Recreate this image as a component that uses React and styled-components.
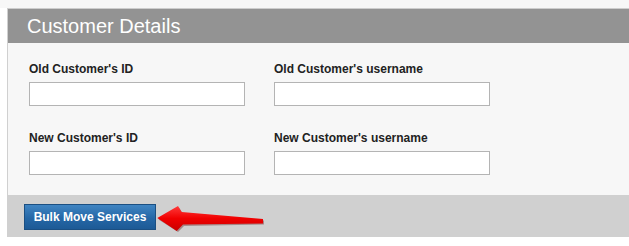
import React from 'react';
import styled, { createGlobalStyle } from 'styled-components';


const GlobalStyle = createGlobalStyle`
  body {
    margin: 0;
    background: #fff;
    font-family: "Liberation Sans", Arial, sans-serif;
  }
`;


const Page = styled.div`
  padding: 8px 0 0 7px;
  background: linear-gradient(#f7f7f7, #f7f7f7) top / 100% 8px no-repeat;
`;

const Panel = styled.section`
  background: #d0d0d0;
  border-top: 1px solid #cdcdcd;
  border-left: 1px solid #d0d0d0;
`;

const Header = styled.h2`
  margin: 0;
  height: 34px;
  padding-left: 19px;
  background: #939393;
  color: #fff;
  font-size: 20px;
  font-weight: normal;
  line-height: 34px;
`;

const Body = styled.div`
  background: #f7f7f7;
  padding: 19px 0 20px 21px;
  display: grid;
  grid-template-columns: 216px 216px;
  column-gap: 29px;
  row-gap: 25px;
`;

const Field = styled.label`
  display: flex;
  flex-direction: column;
  gap: 6px;
`;

const Label = styled.span`
  font-size: 12px;
  font-weight: bold;
  line-height: 14px;
  color: #222;
`;

const Input = styled.input`
  box-sizing: border-box;
  width: 216px;
  height: 24px;
  margin: 0;
  border: 1px solid #b4b4b4;
  background: #fff;
  outline: none;
`;

const Footer = styled.div`
  display: flex;
  align-items: center;
  height: 42px;
  box-sizing: border-box;
  padding: 9px 16px 7px;
`;

const Button = styled.button`
  box-sizing: border-box;
  height: 26px;
  width: 132px;
  padding: 0;
  border: 1px solid #1b4f82;
  background: linear-gradient(#3f84c2, #2567a6 55%, #1d5a96);
  color: #fff;
  font-family: inherit;
  font-size: 12px;
  font-weight: bold;
  cursor: pointer;
`;

const Arrow = () => (
  <svg width="112" height="30" viewBox="0 0 112 30">
    <defs>
      <linearGradient id="arrowFill" x1="0" y1="0" x2="0" y2="1">
        <stop offset="0" stopColor="#ff3b3b" />
        <stop offset="0.5" stopColor="#f00000" />
        <stop offset="1" stopColor="#c80000" />
      </linearGradient>
    </defs>
    <path
      d="M2.5 17.5 L23 5.5 L27 12 L108 18.5 L108 22.5 L28 24 L22 30 Z"
      fill="rgba(90,0,0,0.35)"
    />
    <path
      d="M1.3 16 L22 4 L25.7 10 L107 17 L107 21.5 L27 22.5 L20.7 29 Z"
      fill="url(#arrowFill)"
    />
  </svg>
);


const fields = [
  "Old Customer's ID",
  "Old Customer's username",
  "New Customer's ID",
  "New Customer's username",
];


const App = () => (
  <Page>
    <GlobalStyle />
    <Panel>
      <Header>Customer Details</Header>

      <Body>
        {fields.map(name => (
          <Field key={name}>
            <Label>{name}</Label>
            <Input type="text" />
          </Field>
        ))}
      </Body>

      <Footer>
        <Button>Bulk Move Services</Button>
        <Arrow />
      </Footer>
    </Panel>
  </Page>
);


export default App;
